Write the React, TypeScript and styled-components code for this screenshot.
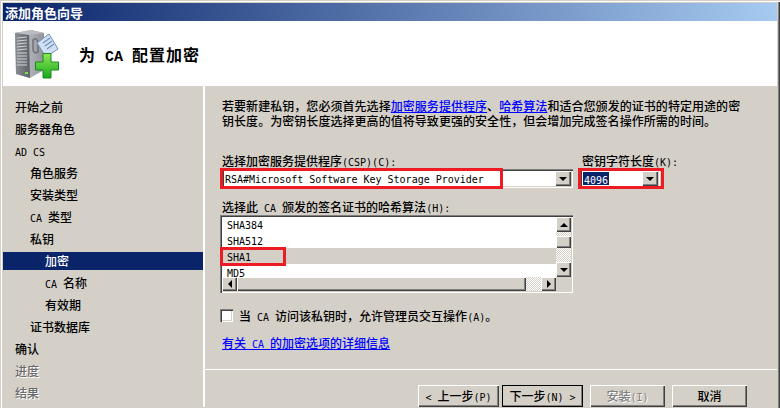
import styled, { createGlobalStyle } from "styled-components";

const FACE = "#d4d0c8";
const RED = "#ed1c24";

const sunken = `box-shadow: inset 1px 1px #808080, inset 2px 2px #404040, inset -1px -1px #fff, inset -2px -2px ${FACE};`;
const raised = `box-shadow: inset 1px 1px #fff, inset -1px -1px #404040, inset -2px -2px #808080;`;

const GlobalStyle = createGlobalStyle`
  html, body {
    margin: 0;
    padding: 0;
    overflow: hidden;
    background: ${FACE};
  }
  body {
    font-family: "Noto Sans CJK SC", "Liberation Sans", sans-serif;
    font-size: 12px;
    font-weight: 500;
    color: #000;
  }
`;

const Window = styled.div`
  box-sizing: border-box;
  width: 780px;
  height: 408px;
  padding: 3px 3px 1px 3px;
  background: ${FACE};
  display: flex;
  flex-direction: column;
  overflow: hidden;
  box-shadow: inset 1px 1px ${FACE}, inset 2px 2px #fff, inset -1px 0 #404040,
    inset -2px 0 #808080;
`;

const TitleBar = styled.div`
  height: 18px;
  flex: none;
  padding-left: 2px;
  display: flex;
  align-items: center;
  color: #fff;
  font-size: 13px;
  font-weight: 700;
  background: linear-gradient(90deg, #0a246a, #a6caf0);
`;

const Header = styled.div`
  height: 65px;
  flex: none;
  background: #fff;
  display: flex;
  align-items: center;
  padding-left: 12px;
`;

const HeaderTitle = styled.h1`
  margin: 0 0 0 18px;
  font-size: 16px;
  font-weight: 700;
  white-space: pre;
  color: #000;
`;

const HeaderLat = styled.span`
  font-family: "Liberation Mono", monospace;
  font-size: 15px;
  margin: 0 9px 0 10px;
`;

const HeaderRest = styled.span`
  letter-spacing: 1px;
`;

const Body = styled.div`
  flex: 1;
  display: flex;
  min-height: 0;
`;

const Sidebar = styled.div`
  width: 200px;
  flex: none;
  padding-top: 12px;
  display: flex;
  flex-direction: column;
  gap: 4px;
`;

const NavItem = styled.div<{ $level?: number; $selected?: boolean; $muted?: boolean }>`
  height: 18px;
  line-height: 18px;
  white-space: pre;
  padding-left: ${(props) => 12 + (props.$level ?? 0) * 15}px;
  background: ${(props) => (props.$selected ? "#0a246a" : "transparent")};
  color: ${(props) =>
    props.$selected ? "#fff" : props.$muted ? "#6a6a6a" : "#000"};
  text-shadow: ${(props) => (props.$muted ? "1px 1px 0 #fff" : "none")};
`;

const Lat = styled.span`
  font-family: "DejaVu Sans Mono", monospace;
  font-size: 10px;
  font-weight: 400;
  white-space: pre;
`;

const Main = styled.div`
  flex: 1;
  display: flex;
  flex-direction: column;
  border-left: 2px solid #fff;
`;

const Content = styled.div`
  flex: 1;
  padding: 12px 0 0 15px;
`;

const Intro = styled.p`
  margin: 0 0 26px 2px;
  width: 522px;
  line-height: 15px;
  letter-spacing: 0.05px;
`;

const TextLink = styled.a`
  color: #0000ff;
  text-decoration: underline;
`;

const FieldRow = styled.div`
  display: flex;
  gap: 7px;
  padding-left: 2px;
`;

const Field = styled.div<{ $width: number }>`
  width: ${(props) => props.$width}px;
`;

const Label = styled.div<{ $indent?: number }>`
  height: 14px;
  line-height: 14px;
  margin-bottom: 1px;
  white-space: pre;
  padding-left: ${(props) => props.$indent ?? 0}px;
`;

const Combo = styled.div`
  position: relative;
  box-sizing: border-box;
  height: 19px;
  padding: 2px;
  background: #fff;
  display: flex;
  align-items: center;
  ${sunken}
`;

const ComboValue = styled.div`
  flex: 1;
  padding-left: 1px;
  line-height: 14px;
  white-space: pre;
`;

const SelectedValue = styled.span`
  display: inline-block;
  height: 13px;
  line-height: 13px;
  padding: 0 1px;
  background: #0a246a;
  color: #fff;
`;

const ComboButton = styled.div`
  width: 16px;
  height: 15px;
  flex: none;
  background: ${FACE};
  display: flex;
  align-items: center;
  justify-content: center;
  ${raised}
`;

const Arrow = styled.span<{ $dir: "up" | "down" | "left" | "right" }>`
  width: 0;
  height: 0;
  border-style: solid;
  border-color: transparent;
  ${(props) =>
    props.$dir === "down"
      ? "border-width: 4px 4px 0 4px; border-top-color: #000;"
      : props.$dir === "up"
      ? "border-width: 0 4px 4px 4px; border-bottom-color: #000;"
      : props.$dir === "left"
      ? "border-width: 4px 4px 4px 0; border-right-color: #000;"
      : "border-width: 4px 0 4px 4px; border-left-color: #000;"}
`;

const Callout = styled.div<{ $left: number; $top: number; $w: number; $h: number }>`
  position: absolute;
  box-sizing: border-box;
  left: ${(props) => props.$left}px;
  top: ${(props) => props.$top}px;
  width: ${(props) => props.$w}px;
  height: ${(props) => props.$h}px;
  border: 3px solid ${RED};
  pointer-events: none;
`;

const ListLabel = styled(Label)`
  margin-top: 12px;
  margin-left: 2px;
`;

const ListBox = styled.div`
  position: relative;
  box-sizing: border-box;
  width: 353px;
  height: 78px;
  padding: 2px;
  background: #fff;
  display: grid;
  grid-template-columns: 334px 15px;
  grid-template-rows: 60px 14px;
  ${sunken}
`;

const Rows = styled.div`
  overflow: hidden;
`;

const Row = styled.div<{ $selected?: boolean }>`
  height: 16px;
  line-height: 15px;
  padding-left: 5px;
  background: ${(props) => (props.$selected ? FACE : "transparent")};
  &:first-child {
    margin-top: -1px;
  }
`;

const Track = styled.div<{ $size?: number }>`
  ${(props) => (props.$size ? `flex: 0 0 ${props.$size}px;` : "flex: 1;")}
  background: repeating-conic-gradient(#fff 0 25%, ${FACE} 0 50%) 0 0 / 2px 2px;
`;

const VScroll = styled.div`
  display: flex;
  flex-direction: column;
`;

const HScroll = styled.div`
  display: flex;
`;

const ScrollButton = styled.div`
  flex: 0 0 15px;
  background: ${FACE};
  display: flex;
  align-items: center;
  justify-content: center;
  ${raised}
`;

const Thumb = styled.div<{ $size: number }>`
  flex: 0 0 ${(props) => props.$size}px;
  background: ${FACE};
  ${raised}
`;

const Corner = styled.div`
  background: ${FACE};
`;

const CheckRow = styled.label`
  display: flex;
  align-items: center;
  height: 14px;
  margin-top: 15px;
`;

const CheckText = styled.span`
  white-space: pre;
`;

const CheckBox = styled.span`
  box-sizing: border-box;
  width: 13px;
  height: 13px;
  margin-right: 6px;
  background: #fff;
  ${sunken}
`;

const MoreInfo = styled.div`
  margin: 14px 0 0 2px;
  height: 14px;
  line-height: 14px;
`;

const Footer = styled.div`
  flex: none;
  box-sizing: border-box;
  height: 38px;
  border-top: 1px solid #fff;
  padding: 15px 0 0 213px;
  display: flex;
`;

const Button = styled.div<{ $width: number; $gap?: number; $default?: boolean; $disabled?: boolean }>`
  box-sizing: border-box;
  width: ${(props) => props.$width}px;
  height: 22px;
  line-height: 22px;
  margin-right: ${(props) => props.$gap ?? 7}px;
  text-align: center;
  white-space: pre;
  background: ${FACE};
  color: ${(props) => (props.$disabled ? "#808080" : "#000")};
  text-shadow: ${(props) => (props.$disabled ? "1px 1px 0 #fff" : "none")};
  ${raised}
  ${(props) => (props.$default ? "outline: 1px solid #000; outline-offset: -1px;" : "")}
`;

function WizardIcon() {
  return (
    <svg width="46" height="52" viewBox="15 28 46 52">
      <defs>
        <linearGradient id="front" x1="0" y1="0" x2="1" y2="0">
          <stop offset="0" stopColor="#8a8f96" />
          <stop offset="1" stopColor="#5c6168" />
        </linearGradient>
        <linearGradient id="side" x1="0" y1="0" x2="1" y2="0">
          <stop offset="0" stopColor="#cfd2d6" />
          <stop offset="1" stopColor="#8f9399" />
        </linearGradient>
        <linearGradient id="plus" x1="0" y1="0" x2="0" y2="1">
          <stop offset="0" stopColor="#8fe85a" />
          <stop offset="1" stopColor="#17a81a" />
        </linearGradient>
      </defs>
      <path d="M15 33 L31 30 L44 33 L44 70 L30 78 L16 74 Z" fill="url(#side)" />
      <path d="M15 33 L29 31 L30 78 L16 74 Z" fill="url(#front)" />
      <path d="M15 33 L31 30 L44 33 L29 35 Z" fill="#b9bcc0" />
      <path
        d="M17 38 L27 37 M17 41 L27 40 M17 44 L27 43 M17 47 L27 46 M17 50 L27 49 M17 53 L27 53 M17 56 L27 56 M17 59 L27 59 M17 62 L27 62 M17 65 L27 65"
        stroke="#d0d3d6"
        strokeWidth="1"
      />
      <rect x="25" y="72" width="3" height="2" fill="#7fe04a" />
      <path d="M33 40 Q37 36 38 44 L38 52 Q34 54 33 50 Z" fill="none" stroke="#6d7177" strokeWidth="1.5" />
      <path d="M37 43 L49 34 L58 49 L46 57 Z" fill="#cfe0f5" stroke="#6f8fb8" strokeWidth="1" />
      <path d="M43 43 L50 38 M45 46 L52 41 M47 49 L54 44" stroke="#6f8fb8" strokeWidth="1.2" />
      <path
        d="M43 53.5 H51 V62 H58.5 V70 H51 V78 H43 V70 H35.5 V62 H43 Z"
        fill="url(#plus)"
        stroke="#1d8a1d"
        strokeWidth="1"
      />
    </svg>
  );
}

const navItems: { label: React.ReactNode; level?: number; selected?: boolean; muted?: boolean }[] = [
  { label: "开始之前" },
  { label: "服务器角色" },
  { label: <Lat>AD CS</Lat> },
  { label: "角色服务", level: 1 },
  { label: "安装类型", level: 1 },
  { label: <><Lat>CA </Lat>类型</>, level: 1 },
  { label: "私钥", level: 1 },
  { label: "加密", level: 2, selected: true },
  { label: <><Lat>CA </Lat>名称</>, level: 2 },
  { label: "有效期", level: 2 },
  { label: "证书数据库", level: 1 },
  { label: "确认" },
  { label: "进度", muted: true },
  { label: "结果", muted: true },
];

export default function App() {
  return (
    <Window>
      <GlobalStyle />
      <TitleBar>添加角色向导</TitleBar>
      <Header>
        <WizardIcon />
        <HeaderTitle>
          为<HeaderLat>CA</HeaderLat>
          <HeaderRest>配置加密</HeaderRest>
        </HeaderTitle>
      </Header>
      <Body>
        <Sidebar>
          {navItems.map((item, index) => (
            <NavItem
              key={index}
              $level={item.level}
              $selected={item.selected}
              $muted={item.muted}
            >
              {item.label}
            </NavItem>
          ))}
        </Sidebar>
        <Main>
          <Content>
            <Intro>
              若要新建私钥，您必须首先选择
              <TextLink>加密服务提供程序</TextLink>、
              <TextLink>哈希算法</TextLink>
              和适合您颁发的证书的特定用途的密钥长度。为密钥长度选择更高的值将导致更强的安全性，但会增加完成签名操作所需的时间。
            </Intro>
            <FieldRow>
              <Field $width={351}>
                <Label>
                  选择加密服务提供程序<Lat>(CSP)(C):</Lat>
                </Label>
                <Combo>
                  <ComboValue>
                    <Lat>RSA#Microsoft Software Key Storage Provider</Lat>
                  </ComboValue>
                  <ComboButton>
                    <Arrow $dir="down" />
                  </ComboButton>
                  <Callout $left={-2} $top={-1} $w={283} $h={21} />
                </Combo>
              </Field>
              <Field $width={80}>
                <Label $indent={2}>
                  密钥字符长度<Lat>(K):</Lat>
                </Label>
                <Combo>
                  <ComboValue>
                    <SelectedValue>
                      <Lat>4096</Lat>
                    </SelectedValue>
                  </ComboValue>
                  <ComboButton>
                    <Arrow $dir="down" />
                  </ComboButton>
                  <Callout $left={-2} $top={-1} $w={86} $h={21} />
                </Combo>
              </Field>
            </FieldRow>
            <ListLabel>
              选择此<Lat> CA </Lat>颁发的签名证书的哈希算法<Lat>(H):</Lat>
            </ListLabel>
            <ListBox>
              <Rows>
                <Row><Lat>SHA384</Lat></Row>
                <Row><Lat>SHA512</Lat></Row>
                <Row $selected><Lat>SHA1</Lat></Row>
                <Row><Lat>MD5</Lat></Row>
              </Rows>
              <VScroll>
                <ScrollButton><Arrow $dir="up" /></ScrollButton>
                <Track $size={4} />
                <Thumb $size={12} />
                <Track />
                <ScrollButton><Arrow $dir="down" /></ScrollButton>
              </VScroll>
              <HScroll>
                <ScrollButton><Arrow $dir="left" /></ScrollButton>
                <Thumb $size={289} />
                <Track />
                <ScrollButton><Arrow $dir="right" /></ScrollButton>
              </HScroll>
              <Corner />
              <Callout $left={0} $top={32} $w={66} $h={19} />
            </ListBox>
            <CheckRow>
              <CheckBox />
              <CheckText>
                当<Lat> CA </Lat>访问该私钥时，允许管理员交互操作<Lat>(A)</Lat>。
              </CheckText>
            </CheckRow>
            <MoreInfo>
              <TextLink>
                有关<Lat> CA </Lat>的加密选项的详细信息
              </TextLink>
            </MoreInfo>
          </Content>
          <Footer>
            <Button $width={81} $gap={3}>
              <Lat>&lt; </Lat>上一步<Lat>(P)</Lat>
            </Button>
            <Button $width={81} $default>
              下一步<Lat>(N) &gt;</Lat>
            </Button>
            <Button $width={75} $disabled>
              安装<Lat>(I)</Lat>
            </Button>
            <Button $width={75}>取消</Button>
          </Footer>
        </Main>
      </Body>
    </Window>
  );
}
